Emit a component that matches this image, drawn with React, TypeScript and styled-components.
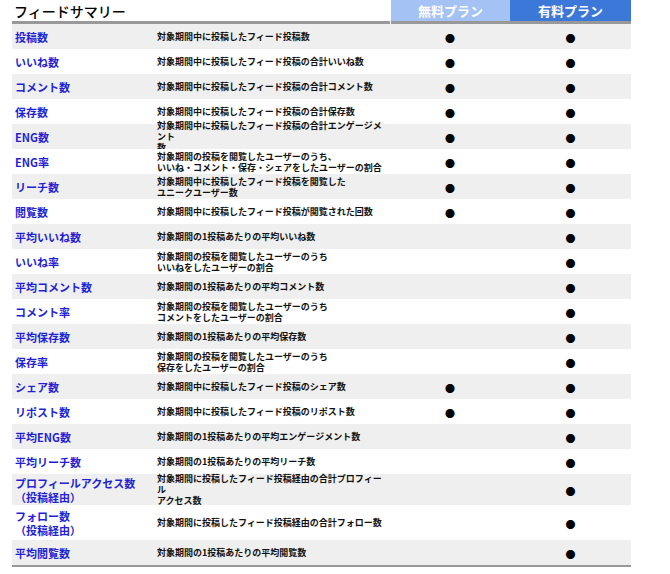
import React from "react";
import styled, { createGlobalStyle } from "styled-components";

const G = createGlobalStyle`
  body { margin: 0; background: #fff; font-family: "Noto Sans CJK JP", "Noto Sans", sans-serif; }
`;

const Table = styled.div`
  margin: 0 0 0 12px;
  width: 619px;
  display: grid;
  grid-template-columns: 145px 233px 120px 121px;
  border-bottom: 2px solid #999;
`;
const Head = styled.div<{ bg?: string }>`
  height: 21px;
  border-bottom: 3px solid #999;
  background: ${(p) => p.bg || "transparent"};
  color: ${(p) => (p.bg ? "#fff" : "#000")};
  font-size: ${(p) => (p.bg ? "13px" : "14px")};
  font-weight: ${(p) => (p.bg ? 700 : 500)};
  display: flex;
  align-items: center;
  justify-content: ${(p) => (p.bg ? "center" : "flex-start")};
  padding-left: ${(p) => (p.bg ? "0" : "2px")};
  margin-left: ${(p) => (p.bg === "#a4c2f4" ? "1px" : "0")};
`;
const Cell = styled.div<{ odd: boolean; h: number }>`
  height: ${(p) => p.h}px;
  background: ${(p) => (p.odd ? "#efefef" : "#fff")};
  display: flex;
  align-items: center;
`;
const Name = styled(Cell)`
  color: #1f1fd6;
  font-size: 11px;
  font-weight: 700;
  line-height: 14px;
  padding-left: 3px;
`;
const Desc = styled(Cell)`
  font-size: 9px;
  font-weight: 700;
  line-height: 11px;
  color: #111;
`;
const Mark = styled(Cell)`
  justify-content: center;
  font-size: 10px;
  padding-top: 4px;
  box-sizing: border-box;
`;

const rows: [string, string, boolean, number?][] = [
  ["投稿数", "対象期間中に投稿したフィード投稿数", true],
  ["いいね数", "対象期間中に投稿したフィード投稿の合計いいね数", true],
  ["コメント数", "対象期間中に投稿したフィード投稿の合計コメント数", true],
  ["保存数", "対象期間中に投稿したフィード投稿の合計保存数", true],
  ["ENG数", "対象期間中に投稿したフィード投稿の合計エンゲージメント\n数", true],
  ["ENG率", "対象期間の投稿を閲覧したユーザーのうち、\nいいね・コメント・保存・シェアをしたユーザーの割合", true],
  ["リーチ数", "対象期間中に投稿したフィード投稿を閲覧した\nユニークユーザー数", true],
  ["閲覧数", "対象期間中に投稿したフィード投稿が閲覧された回数", true],
  ["平均いいね数", "対象期間の1投稿あたりの平均いいね数", false],
  ["いいね率", "対象期間の投稿を閲覧したユーザーのうち\nいいねをしたユーザーの割合", false],
  ["平均コメント数", "対象期間の1投稿あたりの平均コメント数", false],
  ["コメント率", "対象期間の投稿を閲覧したユーザーのうち\nコメントをしたユーザーの割合", false],
  ["平均保存数", "対象期間の1投稿あたりの平均保存数", false],
  ["保存率", "対象期間の投稿を閲覧したユーザーのうち\n保存をしたユーザーの割合", false],
  ["シェア数", "対象期間中に投稿したフィード投稿のシェア数", true],
  ["リポスト数", "対象期間中に投稿したフィード投稿のリポスト数", true],
  ["平均ENG数", "対象期間の1投稿あたりの平均エンゲージメント数", false],
  ["平均リーチ数", "対象期間の1投稿あたりの平均リーチ数", false],
  ["プロフィールアクセス数\n（投稿経由）", "対象期間に投稿したフィード投稿経由の合計プロフィール\nアクセス数", false, 31],
  ["フォロー数\n（投稿経由）", "対象期間に投稿したフィード投稿経由の合計フォロー数", false, 35],
  ["平均閲覧数", "対象期間の1投稿あたりの平均閲覧数", false, 25],
];

const Lines = ({ t }: { t: string }) => (
  <div>
    {t.split("\n").map((l, i) => (
      <div key={i}>{l}</div>
    ))}
  </div>
);

export default function App() {
  return (
    <>
      <G />
      <Table>
        <Head>フィードサマリー</Head>
        <Head />
        <Head bg="#a4c2f4">無料プラン</Head>
        <Head bg="#3c78d8">有料プラン</Head>
        {rows.map(([n, d, free, h], i) => {
          const odd = i % 2 === 0;
          const hh = h || 25;
          return (
            <React.Fragment key={n}>
              <Name odd={odd} h={hh}><Lines t={n} /></Name>
              <Desc odd={odd} h={hh}><Lines t={d} /></Desc>
              <Mark odd={odd} h={hh}>{free ? "●" : ""}</Mark>
              <Mark odd={odd} h={hh}>●</Mark>
            </React.Fragment>
          );
        })}
      </Table>
    </>
  );
}
